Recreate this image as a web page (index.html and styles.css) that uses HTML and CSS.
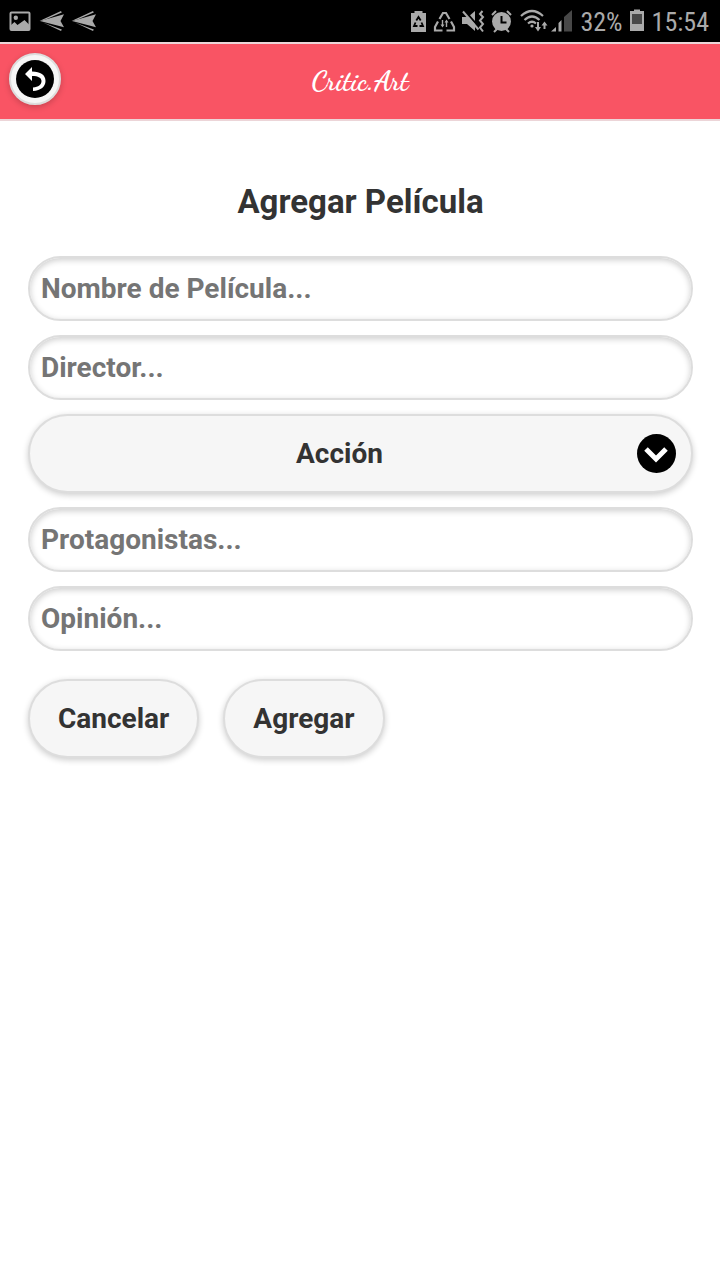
FILE: index.html
```html
<!DOCTYPE html>
<html lang="es">
<head>
<meta charset="utf-8">
<meta name="viewport" content="width=device-width, initial-scale=1">
<title>Critic.Art</title>
<link rel="stylesheet" href="styles.css">
</head>
<body>
<div class="status">
  <svg class="status-left" width="100" height="42" viewBox="0 0 100 42" aria-hidden="true">
    <rect x="10.500" y="12.500" width="19" height="17.500" rx="1" fill="none" stroke="#aaa" stroke-width="2"/>
    <circle cx="15.800" cy="17.800" r="2.200" fill="#aaa"/>
    <path d="M11 29v-4l3.500-3 3 3 7-5 5 5v4z" fill="#aaa"/>
    <g id="plane" fill="#aaa"><path d="M39.500 21 61 11l.8 1.600L45 19.800z"/><path d="M40 21 64 14.200 60.500 21l3.500 6.200z"/><path d="M43 22.500l18.800 7L61 31z"/></g>
    <use href="#plane" x="32"/>
  </svg>
  <svg class="status-right" width="164" height="42" viewBox="409 0 164 42" aria-hidden="true">
    <path d="M412 13h3.500v-2h8v2h3.500v19h-15z" fill="#aaa"/>
    <path d="M417.300 20.500l2.200-3.500 2.200 3.500M422.500 22.500l1.500 3.500h-3.500M418.500 26H415l1.500-3.500" fill="none" stroke="#000" stroke-width="1.800"/>
    <path d="M440.500 19l3.500-6h3l3.500 6M452 21.500l3 5.500v3.500H447.500M443.500 30.500H436V27l3-5.500" fill="none" stroke="#aaa" stroke-width="2.200"/>
    <path d="M443.500 20v5M447.500 22v5" stroke="#aaa" stroke-width="1.400"/><path d="M441.500 24.500h4l-2 3zM445.500 22.500h4l-2-3z" fill="#aaa"/>
    <path d="M463 17h6l7-6v20l-8-7h-5z" fill="#aaa"/>
    <path d="M465.500 10.500l16 18.500" stroke="#000" stroke-width="2"/>
    <path d="M464 11.500l15.500 18" stroke="#aaa" stroke-width="2"/>
    <path d="M483.500 11l-2.500 3 3 3-3 3.500 3 3.500-3 3.500 3 4" fill="none" stroke="#aaa" stroke-width="2"/>
    <circle cx="502.500" cy="21.500" r="9.500" fill="#aaa"/>
    <path d="M493 15l4-4M508 11l4 4M495 32l3-3M510 32l-3-3" stroke="#aaa" stroke-width="2"/>
    <path d="M502.500 16v6.500h5" fill="none" stroke="#000" stroke-width="2"/>
    <path d="M522 16q11-10 22 0M525.500 20q7.500-7 15 0M529 23.500q4-3.500 8 0" fill="none" stroke="#aaa" stroke-width="2.200"/>
    <circle cx="533" cy="26" r="1.600" fill="#aaa"/>
    <path d="M539 22v7M545.500 29v-6" stroke="#aaa" stroke-width="2"/><path d="M536 27h6l-3 4.500zM542.500 25.500h6l-3-4z" fill="#aaa"/>
    <path d="M552 31.500l5-4.500v4.500zM559.500 31.500v-8.500l3-3v11.500z" fill="#aaa"/><path d="M565 31.500V17l8-7v21.500z" fill="#484848"/>
  </svg>
  <span class="status-text">32%</span>
  <svg class="battery" width="14" height="42" viewBox="0 0 14 42" aria-hidden="true"><path d="M0 11h4V9.500h6V11h4v20H0z" fill="#aaa"/><path d="M2 14h10v10H2z" fill="#484848"/></svg>
  <span class="status-text">15:54</span>
</div>
<header class="header">
  <button class="back" type="button" aria-label="Volver">
    <svg width="38" height="38" viewBox="0 0 38 38" aria-hidden="true">
      <circle cx="19" cy="19" r="19" fill="#000"/>
      <path d="M9 14l7-7v4.500c8.500 0 13.500 3.500 13.500 9.500 0 5.500-4.500 9.500-12.500 10v-3.500c5.500-.5 8.500-3 8.500-6.500 0-3-3-5-9.500-5v5z" fill="#fff"/>
    </svg>
  </button>
  <h1 class="brand">Critic.Art</h1>
</header>
<main class="content">
  <h3 class="title">Agregar Película</h3>
  <form class="form">
    <input class="field" type="text" placeholder="Nombre de Película..." aria-label="Nombre de Película">
    <input class="field" type="text" placeholder="Director..." aria-label="Director">
    <div class="select-wrap">
      <select class="raised select" aria-label="Género"><option>Acción</option></select>
      <svg class="chevron" width="39" height="39" viewBox="0 0 39 39" aria-hidden="true"><circle cx="19.500" cy="19.500" r="19.500" fill="#000"/><path d="M9 15l10 10 10-10" fill="none" stroke="#fff" stroke-width="5"/></svg>
    </div>
    <input class="field" type="text" placeholder="Protagonistas..." aria-label="Protagonistas">
    <input class="field" type="text" placeholder="Opinión..." aria-label="Opinión">
    <div class="actions">
      <button class="raised button" type="button">Cancelar</button>
      <button class="raised button" type="button">Agregar</button>
    </div>
  </form>
</main>
</body>
</html>
```
FILE: styles.css
```css
* { box-sizing: border-box; }
body { margin: 0; background: #fff; color: #333; font-family: Roboto, sans-serif; font-size: 28px; }
.status { display: flex; align-items: center; height: 42px; padding-right: 11px; background: #000; color: #aaa; font-family: "Roboto Condensed", Roboto, sans-serif; font-size: 26px; line-height: 40px; }
.status-right { margin-left: auto; margin-right: 8px; }
.status-text { padding-top: 2px; }
.battery { margin: 0 8px 0 7px; }
.header { display: grid; grid-template-columns: 52px 1fr 52px; align-items: center; padding: 9px 9px 14px; background: #f95464; border-top: 2px solid #ecd5d8; border-bottom: 2px solid #ecd5d8; }
.back { display: grid; place-items: center; width: 52px; height: 52px; padding: 0; border: 2px solid #ddd; border-radius: 50%; background: #f6f6f6; box-shadow: 0 2px 6px rgba(0, 0, 0, .2); }
.brand { margin: 0; padding-top: 4px; color: #fff; font-family: "Dancing Script", "Liberation Serif", cursive; font-size: 28px; font-weight: 700; line-height: 48px; text-align: center; }
.content { padding: 60px 27px 28px 28px; }
.title { margin: 0; font-size: 33px; font-weight: 700; line-height: 42px; text-align: center; }
.form { display: flex; flex-direction: column; gap: 14px; margin-top: 33px; }
.field { width: 100%; height: 65px; padding: 0 11px; border: 2px solid #ddd; border-radius: 33px; background: #fff; box-shadow: inset 0 2px 6px rgba(0, 0, 0, .2); color: #333; font: 700 28px Roboto, sans-serif; }
.field::placeholder { color: #757575; opacity: 1; }
.raised { height: 79px; border: 2px solid #ddd; border-radius: 40px; background: #f6f6f6; box-shadow: 0 2px 6px rgba(0, 0, 0, .2); color: #333; font: 700 28px Roboto, sans-serif; }
.select-wrap { position: relative; display: flex; }
.select { flex: 1; padding: 0 70px 0 28px; appearance: none; text-align: center; text-align-last: center; }
.chevron { position: absolute; top: 20px; right: 17px; pointer-events: none; }
.actions { display: flex; gap: 24px; margin-top: 14px; }
.button { padding: 0 28px; }
```
